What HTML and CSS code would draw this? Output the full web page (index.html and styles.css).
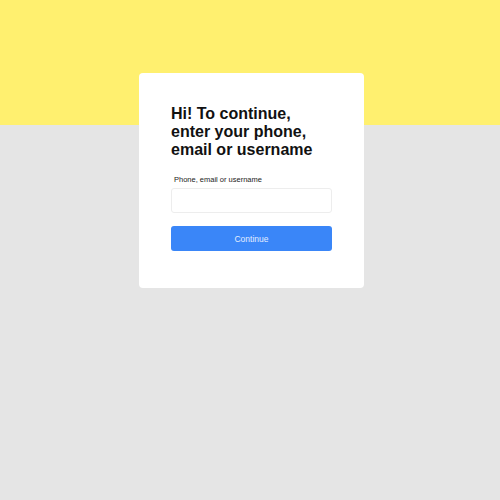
FILE: index.html
```html
<!DOCTYPE html>
<html>
<head>
<meta charset="utf-8">
<link rel="stylesheet" href="styles.css">
</head>
<body>
<div class="page">
  <div class="card">
    <h1 class="title">Hi! To continue, enter your phone, email or username</h1>
    <label class="label" for="login">Phone, email or username</label>
    <input class="input" id="login" type="text">
    <button class="button">Continue</button>
  </div>
</div>
</body>
</html>
```
FILE: styles.css
```css
html, body {
  margin: 0;
  padding: 0;
  height: 100%;
}
body {
  background: linear-gradient(to bottom, #fff06f 0, #fff06f 125px, #e5e5e5 125px, #e5e5e5 100%);
  font-family: "Liberation Sans", Arial, sans-serif;
}
.page {
  display: flex;
  justify-content: center;
  padding-top: 73px;
  padding-left: 3px;
}
.card {
  box-sizing: border-box;
  width: 225px;
  height: 215px;
  background: #fff;
  border-radius: 4px;
  padding: 32px 32px 0 32px;
  display: flex;
  flex-direction: column;
}
.title {
  margin: 0;
  font-size: 16px;
  line-height: 18px;
  font-weight: bold;
  color: #111;
}
.label {
  margin-top: 16px;
  padding-left: 3px;
  font-size: 7.5px;
  line-height: 10px;
  color: #222;
}
.input {
  box-sizing: border-box;
  margin-top: 3px;
  width: 161px;
  height: 25px;
  border: 1px solid #ededed;
  border-radius: 3px;
  background: #fff;
  outline: none;
}
.button {
  box-sizing: border-box;
  margin-top: 13px;
  width: 161px;
  height: 25px;
  border: none;
  border-radius: 3px;
  background: #3a86f8;
  color: #e3edff;
  font-family: "Liberation Sans", Arial, sans-serif;
  font-size: 8.5px;
}
```
